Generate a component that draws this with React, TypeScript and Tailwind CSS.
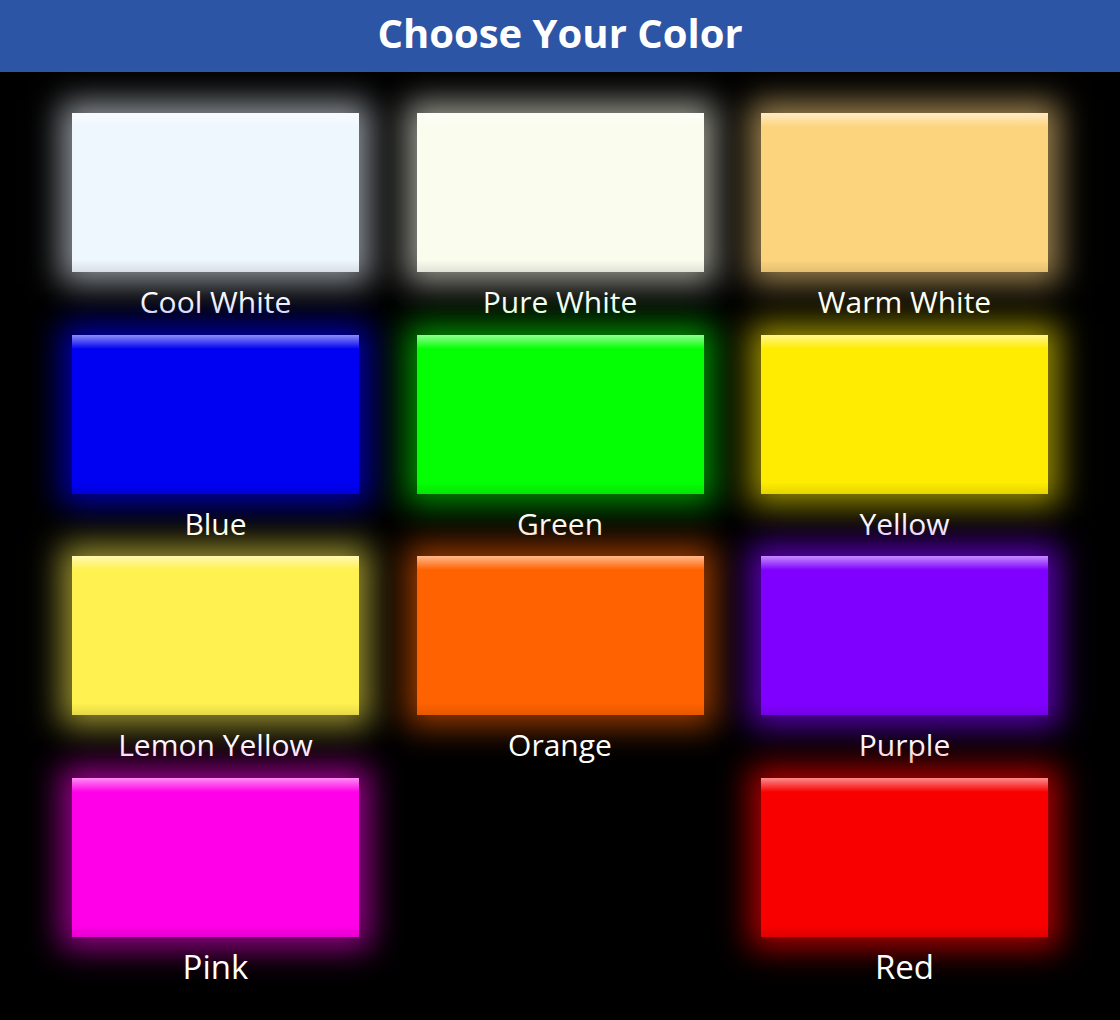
type Swatch = {
  name: string;
  bg: string;
  glow: string;
  big?: boolean;
};

const swatches: (Swatch | null)[] = [
  { name: "Cool White", bg: "bg-[#eff7fe]", glow: "shadow-[0_0_30px_11px_rgba(230,240,250,0.62)]" },
  { name: "Pure White", bg: "bg-[#fafcee]", glow: "shadow-[0_0_30px_11px_rgba(245,245,230,0.62)]" },
  { name: "Warm White", bg: "bg-[#fdd47e]", glow: "shadow-[0_0_30px_11px_rgba(253,212,126,0.62)]" },
  { name: "Blue", bg: "bg-[#0000f2]", glow: "shadow-[0_0_30px_11px_rgba(0,0,242,0.7)]" },
  { name: "Green", bg: "bg-[#04ff04]", glow: "shadow-[0_0_30px_11px_rgba(4,255,4,0.55)]" },
  { name: "Yellow", bg: "bg-[#ffec00]", glow: "shadow-[0_0_30px_11px_rgba(255,236,0,0.6)]" },
  { name: "Lemon Yellow", bg: "bg-[#fff150]", glow: "shadow-[0_0_30px_11px_rgba(255,241,80,0.6)]" },
  { name: "Orange", bg: "bg-[#ff6200]", glow: "shadow-[0_0_30px_11px_rgba(255,98,0,0.6)]" },
  { name: "Purple", bg: "bg-[#8000ff]", glow: "shadow-[0_0_30px_11px_rgba(128,0,255,0.7)]" },
  { name: "Pink", bg: "bg-[#ff00e8]", glow: "shadow-[0_0_30px_11px_rgba(255,0,232,0.6)]", big: true },
  null,
  { name: "Red", bg: "bg-[#f80000]", glow: "shadow-[0_0_30px_11px_rgba(248,0,0,0.7)]", big: true },
];

function ColorCard({ swatch }: { swatch: Swatch | null }) {
  if (!swatch) return <div />;
  return (
    <div className="flex flex-col">
      <div className={`flex h-[159px] flex-col justify-between ${swatch.bg} ${swatch.glow}`}>
        <div className="h-[14px] bg-gradient-to-b from-white/55 to-transparent" />
        <div className="h-[12px] bg-gradient-to-t from-black/10 to-transparent" />
      </div>
      <div className="flex h-[62.7px] items-center justify-center pb-[3px]">
        <span className={`leading-none text-white ${swatch.big ? "text-[33px]" : "text-[30px]"}`}>
          {swatch.name}
        </span>
      </div>
    </div>
  );
}

export default function App() {
  return (
    <div className="h-[1020px] w-[1120px] overflow-hidden bg-black font-['Open_Sans',sans-serif]">
      <div className="flex h-[72px] items-center justify-center bg-[#2c55a5] pb-[6px]">
        <h1 className="text-[40px] font-bold leading-none text-white">Choose Your Color</h1>
      </div>
      <div className="grid grid-cols-[287px_287px_287px] gap-x-[57.5px] px-[72px] pt-[41px]">
        {swatches.map((s, i) => (
          <ColorCard key={s ? s.name : `empty-${i}`} swatch={s} />
        ))}
      </div>
    </div>
  );
}
